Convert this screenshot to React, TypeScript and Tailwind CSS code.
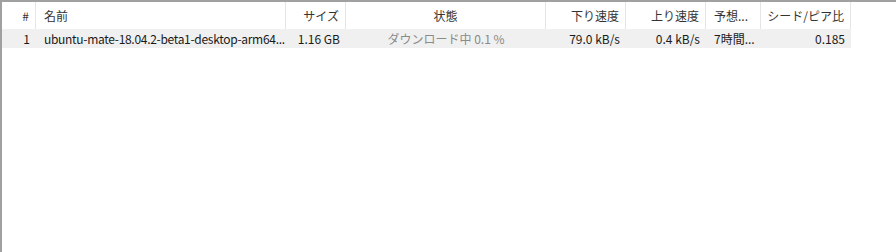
import type { ReactNode } from 'react'

type Col = { key: string; title: string; width: number; align: 'left' | 'right' | 'center' }

const cols: Col[] = [
  { key: 'num', title: '#', width: 34, align: 'right' },
  { key: 'name', title: '名前', width: 250, align: 'left' },
  { key: 'size', title: 'サイズ', width: 60, align: 'right' },
  { key: 'status', title: '状態', width: 200, align: 'center' },
  { key: 'down', title: '下り速度', width: 80, align: 'right' },
  { key: 'up', title: '上り速度', width: 80, align: 'right' },
  { key: 'eta', title: '予想...', width: 55, align: 'left' },
  { key: 'ratio', title: 'シード/ピア比', width: 90, align: 'right' },
]

const row: Record<string, ReactNode> = {
  num: '1',
  name: <span className="tracking-[-0.3px]">ubuntu-mate-18.04.2-beta1-desktop-arm64...</span>,
  size: '1.16 GB',
  status: <span className="text-[#8a8a8a]">ダウンロード中 0.1 %</span>,
  down: '79.0 kB/s',
  up: '0.4 kB/s',
  eta: '7時間...',
  ratio: '0.185',
}

const alignCls = {
  left: 'justify-start pl-2 pr-0',
  right: 'justify-end pr-[6px] pl-1',
  center: 'justify-center px-1',
}

export default function App() {
  return (
    <div
      className="h-[252px] w-[896px] bg-white border-t-2 border-l-2 border-[#a0a0a0] overflow-hidden text-[12px] text-[#1a1a1a]"
      style={{ fontFamily: '"Noto Sans CJK JP", "Noto Sans", sans-serif' }}
    >
      {/* header */}
      <div className="flex h-[27px]">
        {cols.map((c) => (
          <div
            key={c.key}
            style={{ width: c.width }}
            className={`flex items-center shrink-0 border-r border-[#e5e5e5] whitespace-nowrap overflow-hidden text-[#333] ${alignCls[c.align]}`}
          >
            {c.title}
          </div>
        ))}
      </div>
      {/* rows */}
      <div className="flex h-[19px] w-fit bg-[#f0f0f0]">
        {cols.map((c) => (
          <div
            key={c.key}
            style={{ width: c.width }}
            className={`flex items-center shrink-0 whitespace-nowrap overflow-hidden ${alignCls[c.align]}`}
          >
            {row[c.key]}
          </div>
        ))}
      </div>
    </div>
  )
}
